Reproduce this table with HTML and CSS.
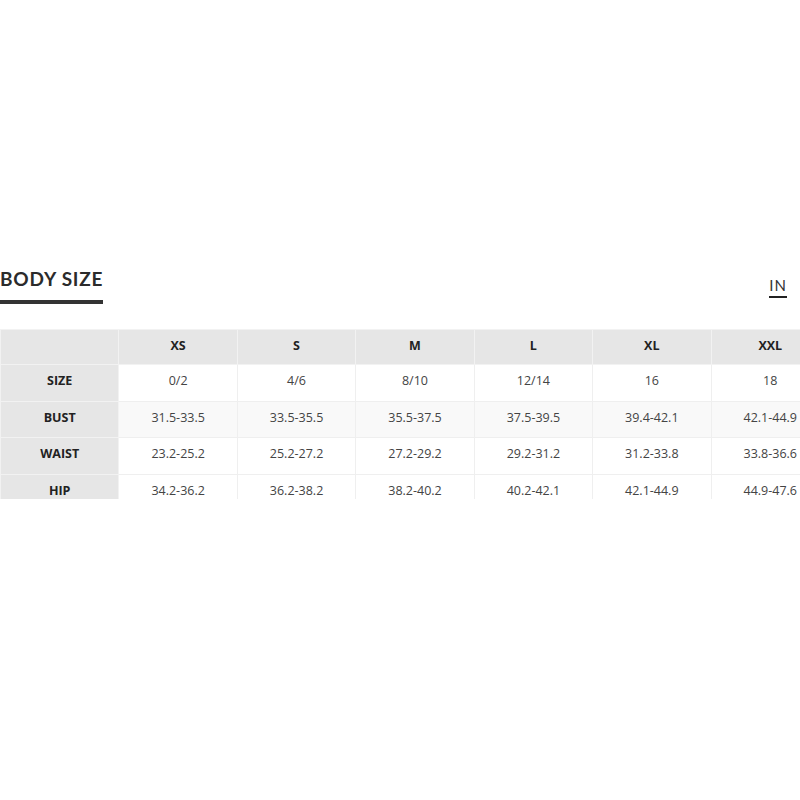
FILE: index.html
```html
<!DOCTYPE html>
<html>
<head>
<meta charset="utf-8">
<link rel="stylesheet" href="styles.css">
</head>
<body>
<div class="page">
  <div class="head">
    <div class="title">BODY SIZE</div>
    <div class="unit">IN</div>
  </div>
  <div class="clip">
    <table class="chart">
      <tr class="hrow">
        <th class="corner"></th><th>XS</th><th>S</th><th>M</th><th>L</th><th>XL</th><th>XXL</th>
      </tr>
      <tr>
        <th class="rh">SIZE</th><td>0/2</td><td>4/6</td><td>8/10</td><td>12/14</td><td>16</td><td>18</td>
      </tr>
      <tr class="alt">
        <th class="rh">BUST</th><td>31.5-33.5</td><td>33.5-35.5</td><td>35.5-37.5</td><td>37.5-39.5</td><td>39.4-42.1</td><td>42.1-44.9</td>
      </tr>
      <tr>
        <th class="rh">WAIST</th><td>23.2-25.2</td><td>25.2-27.2</td><td>27.2-29.2</td><td>29.2-31.2</td><td>31.2-33.8</td><td>33.8-36.6</td>
      </tr>
      <tr>
        <th class="rh">HIP</th><td>34.2-36.2</td><td>36.2-38.2</td><td>38.2-40.2</td><td>40.2-42.1</td><td>42.1-44.9</td><td>44.9-47.6</td>
      </tr>
    </table>
  </div>
</div>
</body>
</html>
```
FILE: styles.css
```css
html, body {
  margin: 0;
  padding: 0;
  background: #fff;
}
.page {
  width: 800px;
  padding-top: 267px;
  font-family: "Open Sans", "Liberation Sans", sans-serif;
  color: #333;
}
.head {
  display: flex;
  justify-content: space-between;
  align-items: flex-start;
  height: 62px;
}
.title {
  font-family: Lato, "Open Sans", sans-serif;
  font-weight: 700;
  font-size: 19px;
  letter-spacing: 0.8px;
  color: #2b2b2b;
  line-height: 24px;
  padding-bottom: 9px;
  border-bottom: 4px solid #333;
  width: 103px;
  white-space: nowrap;
}
.unit {
  font-family: Lato, "Open Sans", sans-serif;
  font-size: 15px;
  letter-spacing: 1px;
  color: #333;
  line-height: 20px;
  margin-top: 8px;
  margin-right: 13px;
  border-bottom: 2px solid #222;
  padding-bottom: 1px;
}
.clip {
  width: 800px;
  height: 170px;
  overflow: hidden;
}
.chart {
  border-collapse: collapse;
  table-layout: fixed;
  width: 830px;
  font-size: 12.5px;
}
.chart th, .chart td {
  width: 117.3px;
  height: 31.5px;
  padding: 0 0 4px;
  text-align: center;
  vertical-align: middle;
  border: 1px solid #efefef;
}
.chart td {
  color: #444;
  background: #fff;
}
.chart tr.alt td {
  background: #f9f9f9;
}
.chart th {
  background: #e6e6e6;
  font-weight: 700;
  color: #222;
  border-color: #f2f2f2;
}
.hrow th {
  height: 30px;
}
```
